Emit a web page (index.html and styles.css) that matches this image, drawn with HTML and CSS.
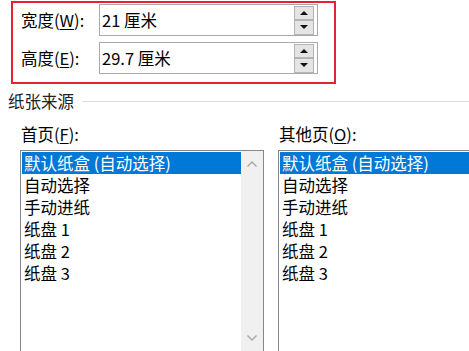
FILE: index.html
```html
<!DOCTYPE html>
<html lang="zh-CN">

<head>
    <meta charset="UTF-8">
    <meta name="viewport" content="width=device-width, initial-scale=1.0">
    <title>纸张</title>
    <link rel="stylesheet" href="styles.css">
</head>

<body>
    <div class="size-group">
        <div class="field">
            <label class="field-label">宽度(<u>W</u>):</label>
            <div class="spin-input">
                <span class="spin-value">21 厘米</span>
                <div class="spin-buttons">
                    <span class="spin-btn"><i class="tri-up"></i></span>
                    <span class="spin-btn"><i class="tri-down"></i></span>
                </div>
            </div>
        </div>
        <div class="field">
            <label class="field-label">高度(<u>E</u>):</label>
            <div class="spin-input">
                <span class="spin-value">29.7 厘米</span>
                <div class="spin-buttons">
                    <span class="spin-btn"><i class="tri-up"></i></span>
                    <span class="spin-btn"><i class="tri-down"></i></span>
                </div>
            </div>
        </div>
    </div>

    <div class="source-head">
        <span>纸张来源</span>
        <div class="source-line"></div>
    </div>

    <div class="trays">
        <div class="tray">
            <div class="tray-label">首页(<u>F</u>):</div>
            <div class="listbox">
                <div class="list-items">
                    <div class="list-item selected">默认纸盒 (自动选择)</div>
                    <div class="list-item">自动选择</div>
                    <div class="list-item">手动进纸</div>
                    <div class="list-item">纸盘 1</div>
                    <div class="list-item">纸盘 2</div>
                    <div class="list-item">纸盘 3</div>
                </div>
                <div class="scrollbar">
                    <svg width="12" height="8" viewBox="0 0 12 8"><path d="M1.5 6.5 L6 2 L10.5 6.5" fill="none" stroke="#a6a6a6" stroke-width="1.4"/></svg>
                    <svg width="12" height="8" viewBox="0 0 12 8"><path d="M1.5 1.5 L6 6 L10.5 1.5" fill="none" stroke="#a6a6a6" stroke-width="1.4"/></svg>
                </div>
            </div>
        </div>
        <div class="tray tray-other">
            <div class="tray-label">其他页(<u>O</u>):</div>
            <div class="listbox">
                <div class="list-items">
                    <div class="list-item selected">默认纸盒 (自动选择)</div>
                    <div class="list-item">自动选择</div>
                    <div class="list-item">手动进纸</div>
                    <div class="list-item">纸盘 1</div>
                    <div class="list-item">纸盘 2</div>
                    <div class="list-item">纸盘 3</div>
                </div>
            </div>
        </div>
    </div>
</body>

</html>
```

FILE: styles.css
```css
/* Base */
body {
    margin: 0;
    padding: 0;
    background-color: #fff;
    color: #000;
    font-family: "Noto Sans CJK SC", "Noto Sans", sans-serif;
    font-size: 16.5px;
    overflow: hidden;
}

u {
    text-decoration-thickness: 1px;
    text-underline-offset: 2px;
}

/* Width / height group */
.size-group {
    margin: 1px 0 0 11px;
    width: 325px;
    height: 83px;
    box-sizing: border-box;
    border: 2px solid #e5222f;
    padding: 1px 0 0 8px;
}

.field {
    display: flex;
    align-items: center;
    height: 32px;
    margin-bottom: 6px;
}

.field-label {
    width: 78px;
    line-height: 20px;
}

.spin-input {
    width: 219px;
    height: 32px;
    box-sizing: border-box;
    border: 1px solid #a9a9a9;
    display: flex;
    align-items: center;
    justify-content: space-between;
    padding: 0 3px 0 2px;
}

.spin-value {
    line-height: 20px;
}

.spin-buttons {
    display: flex;
    flex-direction: column;
    width: 20px;
}

.spin-btn {
    height: 14px;
    box-sizing: border-box;
    border: 1px solid #b4b4b4;
    background-color: #e4e4e4;
    display: flex;
    align-items: center;
    justify-content: center;
}

.spin-btn + .spin-btn {
    height: 15px;
}

.tri-up,
.tri-down {
    width: 0;
    height: 0;
    border-left: 4px solid transparent;
    border-right: 4px solid transparent;
}

.tri-up {
    border-bottom: 4px solid #111;
}

.tri-down {
    border-top: 4px solid #111;
}

/* Paper source */
.source-head {
    display: flex;
    align-items: center;
    margin-top: 7px;
    padding-left: 8px;
    line-height: 20px;
    color: #222;
}

.source-line {
    flex: 1;
    height: 1px;
    margin-left: 8px;
    background-color: #dcdcdc;
}

.trays {
    display: flex;
    gap: 14px;
    margin-top: 13px;
    padding-left: 20px;
}

.tray {
    width: 244px;
    flex-shrink: 0;
}

.tray-other {
    flex: 1;
    width: auto;
    min-width: 0;
}

.tray-label {
    line-height: 20px;
    padding-left: 1px;
    margin-bottom: 6px;
}

.listbox {
    display: flex;
    height: 202px;
    border: 1px solid #828790;
    box-sizing: border-box;
}

.tray-other .listbox {
    border-right: none;
}

.list-items {
    flex: 1;
    margin: 1px 0 0 1px;
}

.list-item {
    height: 22px;
    line-height: 22px;
    padding-left: 2px;
    white-space: nowrap;
}

.list-item.selected {
    background-color: #0078d7;
    color: #fff;
}

.scrollbar {
    width: 22px;
    background-color: #f0f0f0;
    display: flex;
    flex-direction: column;
    justify-content: space-between;
    align-items: center;
    padding: 9px 0;
    box-sizing: border-box;
}
```
